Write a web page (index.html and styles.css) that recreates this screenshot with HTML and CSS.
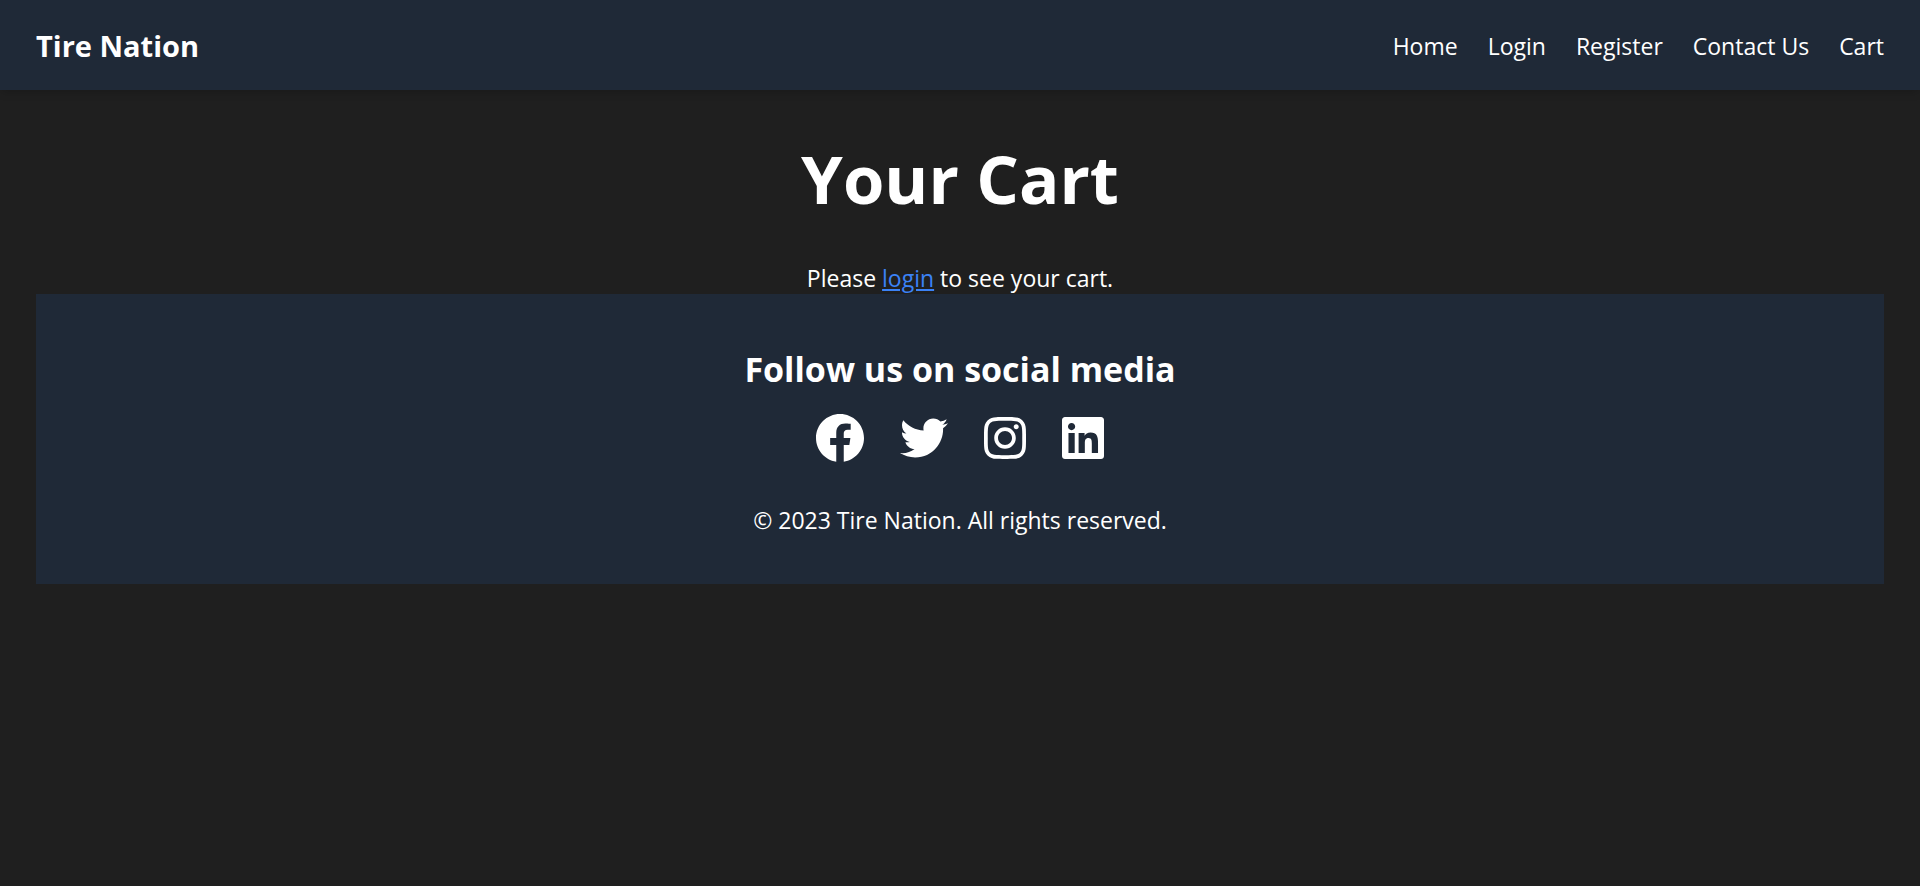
FILE: index.html
```html
<!DOCTYPE html>
<html lang="en">
<head>
  <meta charset="utf-8">
  <meta name="viewport" content="width=device-width, initial-scale=1">
  <title>Tire Nation - Cart</title>
  <link rel="stylesheet" href="styles.css">
</head>
<body>
  <header class="navbar">
    <a class="brand" href="#">Tire Nation</a>
    <nav class="nav-links" aria-label="Main">
      <a href="#">Home</a>
      <a href="#">Login</a>
      <a href="#">Register</a>
      <a href="#">Contact Us</a>
      <a href="#">Cart</a>
    </nav>
  </header>
  <main class="page">
    <h1 class="page-title">Your Cart</h1>
    <p class="notice">Please <a class="notice-link" href="#">login</a> to see your cart.</p>
    <footer class="footer">
      <h2 class="footer-title">Follow us on social media</h2>
      <div class="social">
        <a href="#" aria-label="Facebook"><svg class="icon" viewBox="8 8 496 496"><path d="M504 256C504 119 393 8 256 8S8 119 8 256c0 123.78 90.69 226.38 209.25 245V327.69h-63V256h63v-54.64c0-62.15 37-96.48 93.67-96.48 27.14 0 55.52 4.84 55.52 4.84v61h-31.28c-30.8 0-40.41 19.12-40.41 38.73V256h68.78l-11 71.69h-57.78V501C413.31 482.38 504 379.78 504 256z"/></svg></a>
        <a href="#" aria-label="Twitter"><svg class="icon" viewBox="0 0 512 512"><path d="M459.37 151.716c.325 4.548.325 9.097.325 13.645 0 138.72-105.583 298.558-298.558 298.558-59.452 0-114.68-17.219-161.137-47.106 8.447.974 16.568 1.299 25.34 1.299 49.055 0 94.213-16.568 130.274-44.832-46.132-.975-84.792-31.188-98.112-72.772 6.498.974 12.995 1.624 19.818 1.624 9.421 0 18.843-1.3 27.614-3.573-48.081-9.747-84.143-51.98-84.143-102.985v-1.299c13.969 7.797 30.214 12.67 47.431 13.319-28.264-18.843-46.781-51.005-46.781-87.391 0-19.492 5.197-37.36 14.294-52.954 51.655 63.675 129.3 105.258 216.365 109.807-1.624-7.797-2.599-15.918-2.599-24.04 0-57.828 46.782-104.934 104.934-104.934 30.213 0 57.502 12.67 76.67 33.137 23.715-4.548 46.456-13.32 66.599-25.34-7.798 24.366-24.366 44.833-46.132 57.827 21.117-2.273 41.584-8.122 60.426-16.243-14.292 20.791-32.161 39.308-52.628 54.253z"/></svg></a>
        <a href="#" aria-label="Instagram"><svg class="icon icon-square" viewBox="0 0 448 512"><path d="M224.1 141c-63.6 0-114.9 51.3-114.9 114.9s51.3 114.9 114.9 114.9S339 319.500 339 255.900 287.700 141 224.100 141zm0 189.600c-41.100 0-74.700-33.500-74.700-74.700s33.500-74.700 74.700-74.700 74.700 33.500 74.700 74.700-33.600 74.700-74.700 74.700zm146.400-194.300c0 14.900-12 26.800-26.800 26.800-14.900 0-26.800-12-26.800-26.800s12-26.800 26.800-26.800 26.800 12 26.800 26.800zm76.100 27.200c-1.700-35.900-9.900-67.700-36.200-93.900-26.200-26.200-58-34.400-93.900-36.200-37-2.100-147.900-2.100-184.900 0-35.800 1.700-67.600 9.900-93.900 36.100s-34.400 58-36.200 93.900c-2.100 37-2.100 147.900 0 184.900 1.700 35.900 9.900 67.700 36.200 93.900s58 34.400 93.900 36.200c37 2.100 147.900 2.100 184.900 0 35.900-1.700 67.700-9.900 93.900-36.200 26.200-26.200 34.400-58 36.200-93.900 2.100-37 2.100-147.800 0-184.800zM398.800 388c-7.800 19.600-22.900 34.700-42.600 42.600-29.500 11.700-99.500 9-132.100 9s-102.700 2.600-132.100-9c-19.600-7.800-34.700-22.900-42.600-42.600-11.700-29.500-9-99.500-9-132.100s-2.600-102.700 9-132.100c7.800-19.600 22.900-34.700 42.600-42.600 29.500-11.700 99.500-9 132.100-9s102.700-2.600 132.100 9c19.600 7.800 34.700 22.900 42.600 42.600 11.700 29.500 9 99.500 9 132.100s2.700 102.700-9 132.100z"/></svg></a>
        <a href="#" aria-label="LinkedIn"><svg class="icon icon-square" viewBox="0 0 448 512"><path d="M416 32H31.900C14.300 32 0 46.500 0 64.300v383.400C0 465.500 14.300 480 31.900 480H416c17.600 0 32-14.500 32-32.300V64.300c0-17.800-14.400-32.300-32-32.300zM135.400 416H69V202.200h66.500V416zm-33.200-243c-21.300 0-38.500-17.300-38.500-38.500S80.900 96 102.200 96c21.200 0 38.500 17.300 38.500 38.500 0 21.300-17.200 38.500-38.500 38.500zm282.100 243h-66.400V312c0-24.800-.5-56.700-34.500-56.700-34.600 0-39.900 27-39.900 54.900V416h-66.400V202.200h63.700v29.200h.9c8.900-16.800 30.600-34.500 62.900-34.500 67.200 0 79.700 44.300 79.700 101.900V416z"/></svg></a>
      </div>
      <p class="copyright">© 2023 Tire Nation. All rights reserved.</p>
    </footer>
  </main>
</body>
</html>
```
FILE: styles.css
```css
* {
  box-sizing: border-box;
}

body {
  margin: 0;
  min-height: 100vh;
  background: #1f1f1f;
  color: #fff;
  font-family: "Segoe UI", "Open Sans", "Noto Sans", sans-serif;
  font-size: 23px;
  line-height: 36px;
}

a {
  color: inherit;
  text-decoration: none;
}

.navbar {
  display: flex;
  flex-wrap: wrap;
  align-items: center;
  justify-content: space-between;
  padding: 25px 36px 23px;
  background: #1f2937;
  box-shadow: 0 4px 9px -2px rgba(0, 0, 0, 0.2);
}

.brand {
  font-size: 29px;
  font-weight: 700;
  line-height: 42px;
}

.nav-links {
  display: flex;
  flex-wrap: wrap;
  gap: 30px;
}

.page {
  padding: 36px;
  text-align: center;
}

.page-title {
  margin: 0;
  padding: 16px 0 48px;
  font-size: 67px;
  font-weight: 700;
  line-height: 72px;
}

.notice {
  margin: 0;
  line-height: 32px;
}

.notice-link {
  color: #3b82f6;
  text-decoration: underline;
}

.footer {
  padding: 48px 36px 46px;
  background: #1f2937;
}

.footer-title {
  margin: 0 0 18px;
  font-size: 34px;
  font-weight: 700;
  line-height: 54px;
}

.social {
  display: flex;
  justify-content: center;
  gap: 36px;
  margin-bottom: 40px;
}

.icon {
  display: block;
  width: 48px;
  height: 48px;
  fill: currentColor;
}

.icon-square {
  width: 42px;
}

.copyright {
  margin: 0;
}
```
